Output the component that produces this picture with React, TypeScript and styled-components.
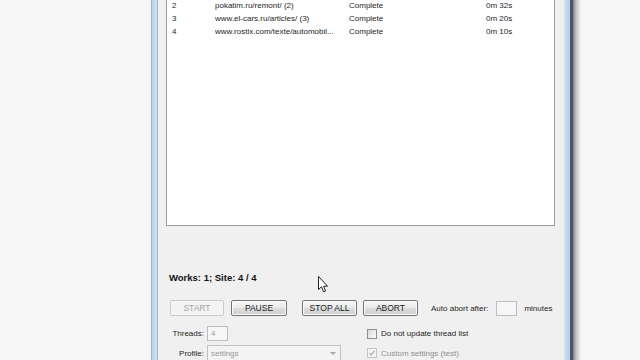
import React from 'react';
import styled, { createGlobalStyle } from 'styled-components';

const GlobalStyle = createGlobalStyle`
  html, body {
    margin: 0;
    padding: 0;
    width: 640px;
    height: 360px;
    overflow: hidden;
    background: #f7f7f7;
    font-family: "Liberation Sans", Arial, sans-serif;
  }
`;

const Desktop = styled.div`
  position: relative;
  display: flex;
  width: 640px;
  height: 360px;
  background: #f6f6f6;
`;

const Backdrop = styled.div<{ $w?: number }>`
  flex: ${(p) => (p.$w ? `0 0 ${p.$w}px` : '1')};
  background: #f6f6f6;
`;

const WindowFrame = styled.div`
  display: flex;
  height: 100%;
`;

const FrameLeft = styled.div`
  width: 5px;
  background: linear-gradient(90deg, #bcd1ea, #cfe0f4);
  border-left: 1px solid #a9b3bf;
  border-right: 1px solid #9fb3cc;
`;

const FrameRight = styled.div`
  width: 5px;
  background: linear-gradient(90deg, #c9dbf1, #b5cbe6);
  border-left: 1px solid #d8e4f2;
  border-right: 3px solid #46566b;
`;

const Shadow = styled.div`
  width: 8px;
  background: linear-gradient(90deg, #808080, #c2c2c2 40%, #f6f6f6);
`;

const Client = styled.div`
  width: 406px;
  background: #f0f0f0;
  display: flex;
  flex-direction: column;
  overflow: hidden;
  font-size: 8px;
  color: #1e1e1e;
  & > * {
    flex-shrink: 0;
  }
`;

const ListBox = styled.div`
  margin: 0 9px 0 8px;
  height: 225px;
  background: #fff;
  border: 1px solid #9c9c9c;
  border-top: none;
  overflow: hidden;
`;

const ListRow = styled.div`
  display: grid;
  grid-template-columns: 43px 134px 137px 1fr;
  height: 13px;
  line-height: 13px;
  padding-left: 5px;
  white-space: nowrap;
  &:first-child {
    margin-top: -1px;
  }
`;

const Cell = styled.span`
  overflow: hidden;
`;

const StatusLabel = styled.div`
  margin: 46px 0 0 11px;
  font-size: 9.5px;
  font-weight: bold;
  line-height: 12px;
  color: #111;
`;

const ButtonRow = styled.div`
  display: flex;
  align-items: center;
  margin: 16px 0 0 12px;
  height: 16px;
`;

const Button = styled.button<{ $offset?: number; $disabled?: boolean }>`
  box-sizing: border-box;
  width: 55px;
  height: 16px;
  margin: 0 0 0 ${(p) => p.$offset ?? 0}px;
  padding: 0;
  font-family: "Liberation Sans", Arial, sans-serif;
  font-size: 8.5px;
  border-radius: 2px;
  border: 1px solid ${(p) => (p.$disabled ? '#c9c9c9' : '#747474')};
  color: ${(p) => (p.$disabled ? '#a3a3a3' : '#1a1a1a')};
  background: ${(p) =>
    p.$disabled
      ? '#f3f3f3'
      : 'linear-gradient(180deg, #f6f6f6 0%, #e9e9e9 50%, #dcdcdc 51%, #d2d2d2 100%)'};
  box-shadow: inset 0 0 0 1px ${(p) => (p.$disabled ? '#f7f7f7' : '#fbfbfb')};
`;

const InlineText = styled.span<{ $offset?: number }>`
  margin-left: ${(p) => p.$offset ?? 0}px;
  white-space: nowrap;
`;

const TextBox = styled.div<{ $w: number; $offset?: number }>`
  box-sizing: border-box;
  width: ${(p) => p.$w}px;
  height: 15px;
  margin-left: ${(p) => p.$offset ?? 0}px;
  border: 1px solid #bcbcbc;
  background: #f6f6f6;
  color: #9a9a9a;
  font-size: 8px;
  line-height: 13px;
  padding-left: 3px;
`;

const Settings = styled.div`
  display: grid;
  grid-template-columns: 44px 157px auto;
  column-gap: 3px;
  row-gap: 4px;
  margin: 10px 0 0 2px;
  align-items: center;
`;

const FieldLabel = styled.span`
  text-align: right;
  white-space: nowrap;
`;

const Combo = styled.div`
  box-sizing: border-box;
  width: 134px;
  height: 16px;
  border: 1px solid #c2c2c2;
  background: #f3f3f3;
  color: #9a9a9a;
  display: flex;
  align-items: center;
  justify-content: space-between;
  padding: 0 4px 0 3px;
`;

const ComboArrow = styled.span`
  width: 0;
  height: 0;
  border-left: 3px solid transparent;
  border-right: 3px solid transparent;
  border-top: 3px solid #a8a8a8;
`;

const CheckRow = styled.label<{ $disabled?: boolean }>`
  display: flex;
  align-items: center;
  gap: 4px;
  color: ${(p) => (p.$disabled ? '#8e8e8e' : '#1e1e1e')};
  white-space: nowrap;
`;

const CheckBox = styled.span<{ $disabled?: boolean }>`
  box-sizing: border-box;
  width: 10px;
  height: 10px;
  border: 1px solid ${(p) => (p.$disabled ? '#c4c4c4' : '#8f8f8f')};
  background: ${(p) => (p.$disabled ? '#f4f4f4' : 'linear-gradient(135deg, #dcdcdc, #f8f8f8)')};
  display: flex;
  align-items: center;
  justify-content: center;
`;

const Cursor = styled.svg`
  position: absolute;
  left: 318px;
  top: 276px;
`;

const rows = [
  ['2', 'pokatim.ru/remont/ (2)', 'Complete', '0m 32s'],
  ['3', 'www.el-cars.ru/articles/ (3)', 'Complete', '0m 20s'],
  ['4', 'www.rostix.com/texte/automobil...', 'Complete', '0m 10s'],
];

const App = () => {
  return (
    <>
      <GlobalStyle />
      <Desktop>
        <Backdrop $w={151} />
        <WindowFrame>
          <FrameLeft />
          <Client>
            <ListBox>
              {rows.map((r) => (
                <ListRow key={r[0]}>
                  {r.map((c, i) => (
                    <Cell key={i}>{c}</Cell>
                  ))}
                </ListRow>
              ))}
            </ListBox>
            <StatusLabel>Works: 1; Site: 4 / 4</StatusLabel>
            <ButtonRow>
              <Button $disabled style={{ width: 54 }}>START</Button>
              <Button $offset={7} style={{ width: 56 }}>PAUSE</Button>
              <Button $offset={15}>STOP ALL</Button>
              <Button $offset={6}>ABORT</Button>
              <InlineText $offset={13}>Auto abort after:</InlineText>
              <TextBox $w={21} $offset={8} />
              <InlineText $offset={7}>minutes</InlineText>
            </ButtonRow>
            <Settings>
              <FieldLabel>Threads:</FieldLabel>
              <TextBox $w={21}>4</TextBox>
              <CheckRow>
                <CheckBox />
                Do not update thread list
              </CheckRow>
              <FieldLabel>Profile:</FieldLabel>
              <Combo>
                settings
                <ComboArrow />
              </Combo>
              <CheckRow $disabled>
                <CheckBox $disabled>
                  <svg width="8" height="8" viewBox="0 0 8 8">
                    <path d="M1.5 4.2 L3.2 6 L6.5 1.8" fill="none" stroke="#a6a6a6" strokeWidth="1.1" />
                  </svg>
                </CheckBox>
                Custom settings (test)
              </CheckRow>
            </Settings>
          </Client>
          <FrameRight />
        </WindowFrame>
        <Shadow />
        <Backdrop />
        <Cursor width="11" height="17" viewBox="0 0 11 17">
          <path d="M0.5 0.5 L0.5 13.5 L3.5 10.8 L5.6 15.8 L7.6 15 L5.6 10.2 L9.6 10.2 Z" fill="#fff" stroke="#222" strokeWidth="1" strokeLinejoin="round" />
        </Cursor>
      </Desktop>
    </>
  );
};

export default App;
